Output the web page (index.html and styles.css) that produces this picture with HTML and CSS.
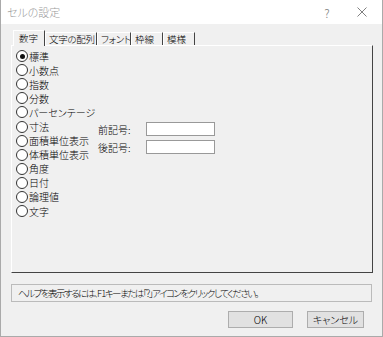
FILE: index.html
```html
<!DOCTYPE html>
<html lang="ja">
<head>
  <meta charset="UTF-8">
  <title>セルの設定</title>
  <link rel="stylesheet" href="styles.css">
</head>
<body>
  <div class="window">
    <div class="titlebar">
      <span class="title">セルの設定</span>
      <span class="title-btn help">?</span>
      <span class="title-btn close">
        <svg width="10" height="10" viewBox="0 0 10 10">
          <path d="M0.5 0.5 L9.5 9.5 M9.5 0.5 L0.5 9.5" stroke="#808080" stroke-width="1" fill="none"/>
        </svg>
      </span>
    </div>

    <div class="content">
      <!-- tabs -->
      <div class="tabs">
        <div class="tab active">数字</div>
        <div class="tab tab-wide">文字の配列</div>
        <div class="tab tab-font">フォント</div>
        <div class="tab">枠線</div>
        <div class="tab">模様</div>
      </div>

      <div class="panel">
        <div class="radios">
          <label class="radio checked"><span class="dot"></span>標準</label>
          <label class="radio"><span class="dot"></span>小数点</label>
          <label class="radio"><span class="dot"></span>指数</label>
          <label class="radio"><span class="dot"></span>分数</label>
          <label class="radio"><span class="dot"></span>パーセンテージ</label>
          <label class="radio"><span class="dot"></span>寸法</label>
          <label class="radio"><span class="dot"></span>面積単位表示</label>
          <label class="radio"><span class="dot"></span>体積単位表示</label>
          <label class="radio"><span class="dot"></span>角度</label>
          <label class="radio"><span class="dot"></span>日付</label>
          <label class="radio"><span class="dot"></span>論理値</label>
          <label class="radio"><span class="dot"></span>文字</label>
        </div>

        <div class="affix">
          <div class="affix-row">
            <span class="affix-label">前記号:</span>
            <input type="text" class="field">
          </div>
          <div class="affix-row">
            <span class="affix-label">後記号:</span>
            <input type="text" class="field">
          </div>
        </div>
      </div>

      <div class="status">ヘルプを表示するには、F 1キーまたは「?」アイコンをクリックしてください。</div>

      <div class="buttons">
        <button class="btn">OK</button>
        <button class="btn btn-cancel">キャンセル</button>
      </div>
    </div>
  </div>
</body>
</html>
```

FILE: styles.css
```css
body {
  margin: 0;
  padding: 0;
  font-family: "Noto Sans CJK JP", "Noto Sans", sans-serif;
  font-size: 10px;
  font-weight: 300;
  font-feature-settings: "palt";
  color: #000;
  background: #f0f0f0;
}

.window {
  width: 381px;
  height: 336px;
  border: 1px solid #aaa;
  border-top: none;
  background: #f0f0f0;
  display: flex;
  flex-direction: column;
}

.titlebar {
  height: 24px;
  flex-shrink: 0;
  background: #fff;
  display: flex;
  align-items: center;
  padding-left: 6px;
}

.title {
  flex: 1;
  color: #9a9a9a;
  font-size: 11px;
}

.title-btn {
  color: #808080;
  text-align: center;
  font-size: 12px;
}

.help {
  width: 34px;
}

.close {
  width: 36px;
  margin-right: 2px;
  display: flex;
  justify-content: center;
}

.content {
  flex: 1;
  padding: 6px 9px 0 10px;
  display: flex;
  flex-direction: column;
}

/* tab strip */
.tabs {
  display: flex;
  padding-left: 2px;
  height: 15px;
  align-items: flex-end;
  flex-shrink: 0;
}

.tab {
  width: 32px;
  height: 13px;
  line-height: 13px;
  box-sizing: border-box;
  padding-left: 3px;
  font-size: 9.5px;
  border-left: 1px solid #fff;
  border-top: 1px solid #fff;
  border-right: 1px solid #444;
  white-space: nowrap;
  overflow: hidden;
}

.tab-wide {
  width: 52px;
  letter-spacing: -0.3px;
}

.tab-font {
  width: 34px;
  letter-spacing: -0.3px;
}

.tab.active {
  height: 16px;
  line-height: 15px;
  padding-left: 5px;
  background: #f0f0f0;
  margin-bottom: -1px;
  position: relative;
  z-index: 1;
}

.panel {
  height: 228px;
  box-sizing: border-box;
  flex-shrink: 0;
  border-top: 1px solid #fff;
  border-left: 1px solid #fff;
  border-right: 1px solid #444;
  border-bottom: 1px solid #444;
  display: flex;
  padding: 3px 0 0 4px;
}

.radios {
  display: flex;
  flex-direction: column;
  width: 82px;
}

.radio {
  display: flex;
  align-items: center;
  height: 14.1px;
  white-space: nowrap;
}

.dot {
  width: 12px;
  height: 12px;
  border: 1px solid #333;
  border-radius: 50%;
  background: #fff;
  margin-right: 1px;
  box-sizing: border-box;
  position: relative;
  flex-shrink: 0;
}

.radio.checked .dot::after {
  content: "";
  position: absolute;
  left: 2.5px;
  top: 2.5px;
  width: 5px;
  height: 5px;
  border-radius: 50%;
  background: #111;
}

.affix {
  margin-top: 73px;
  display: flex;
  flex-direction: column;
  gap: 4px;
}

.affix-row {
  display: flex;
  align-items: center;
  height: 14px;
}

.affix-label {
  width: 48px;
}

.field {
  width: 69px;
  height: 14px;
  box-sizing: border-box;
  border: 1px solid #999;
  background: #fff;
  margin: 0;
  padding: 0;
}

.status {
  margin-top: 11px;
  margin-right: 1px;
  height: 18px;
  flex-shrink: 0;
  box-sizing: border-box;
  border: 1px solid #bbb;
  padding-left: 6px;
  line-height: 16px;
  font-size: 9.5px;
  letter-spacing: -1.5px;
  white-space: nowrap;
  overflow: hidden;
}

.buttons {
  display: flex;
  justify-content: flex-end;
  gap: 14px;
  margin-top: 9px;
  padding-right: 9px;
}

.btn {
  width: 65px;
  height: 17px;
  background: #e1e1e1;
  border: 1px solid #adadad;
  font-family: "Noto Sans CJK JP", "Noto Sans", sans-serif;
  font-weight: 300;
  font-feature-settings: "palt";
  font-size: 10px;
  padding: 0;
  line-height: 15px;
  color: #000;
}

.btn-cancel {
  width: 57px;
}
```
